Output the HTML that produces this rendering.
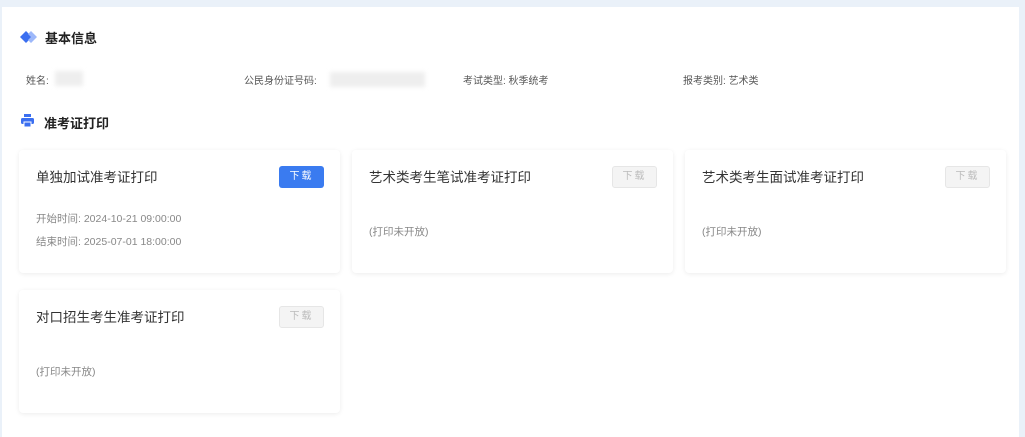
<!DOCTYPE html>
<html><head><meta charset="utf-8"><style>
*{margin:0;padding:0;box-sizing:border-box}
body{width:1025px;height:431px;background:#eaf1f9;font-family:"Liberation Sans","Noto Sans CJK SC",sans-serif;position:relative;overflow:hidden}
.panel{position:absolute;left:2px;top:7px;width:1017px;height:430px;background:#fff}
.abs{position:absolute;white-space:nowrap}
.h{font-size:13px;font-weight:bold;color:#222}
.info{font-size:10px;color:#555;top:72px}
.blur{position:absolute;background:#eee;filter:blur(2px)}
.card{position:absolute;width:321px;height:123px;background:#fff;border-radius:4px;box-shadow:0 1px 5px rgba(0,0,0,0.08)}
.card .t{position:absolute;left:17px;top:16px;font-size:13.5px;color:#333}
.btn{position:absolute;right:16px;top:16px;width:45px;height:22px;border-radius:3px;font-size:10px;text-align:center;line-height:22px;letter-spacing:2px}
.on{background:#3a7bf0;color:#fff}
.off{background:#f4f4f4;border:1px solid #e6e6e6;color:#bbb;line-height:20px}
.s{position:absolute;left:17px;font-size:10.5px;color:#888}
</style></head><body>
<div class="panel"></div>
<svg class="abs" style="left:19px;top:30px" width="20" height="14"><path d="M7 1 L13 7 L7 13 L1 7Z" fill="#3b6ff0"/><path d="M12 1 L18 7 L12 13 L9 10 L12 7 L9 4Z" fill="#9db8fa"/></svg>
<div class="abs h" style="left:45px;top:28px">基本信息</div>
<div class="abs info" style="left:26px">姓名:</div><div class="blur" style="left:55px;top:71px;width:28px;height:15px"></div>
<div class="abs info" style="left:244px">公民身份证号码:</div><div class="blur" style="left:330px;top:72px;width:95px;height:15px"></div>
<div class="abs info" style="left:463px">考试类型: 秋季统考</div>
<div class="abs info" style="left:683px">报考类别: 艺术类</div>
<svg class="abs" style="left:21px;top:114px" width="13" height="13"><rect x="3" y="0" width="7" height="3" fill="#3b6ff0"/><rect x="0" y="4" width="13" height="6" rx="1.5" fill="#3b6ff0"/><rect x="3" y="8" width="7" height="5" fill="#3b6ff0" stroke="#fff" stroke-width="1"/></svg>
<div class="abs h" style="left:44px;top:113px">准考证打印</div>
<div class="card" style="left:19px;top:150px"><div class="t">单独加试准考证打印</div><div class="btn on">下载</div><div class="s" style="top:61px">开始时间: 2024-10-21 09:00:00</div><div class="s" style="top:84px">结束时间: 2025-07-01 18:00:00</div></div>
<div class="card" style="left:352px;top:150px"><div class="t">艺术类考生笔试准考证打印</div><div class="btn off">下载</div><div class="s" style="top:74px">(打印未开放)</div></div>
<div class="card" style="left:685px;top:150px"><div class="t">艺术类考生面试准考证打印</div><div class="btn off">下载</div><div class="s" style="top:74px">(打印未开放)</div></div>
<div class="card" style="left:19px;top:290px"><div class="t">对口招生考生准考证打印</div><div class="btn off">下载</div><div class="s" style="top:74px">(打印未开放)</div></div>
</body></html>
